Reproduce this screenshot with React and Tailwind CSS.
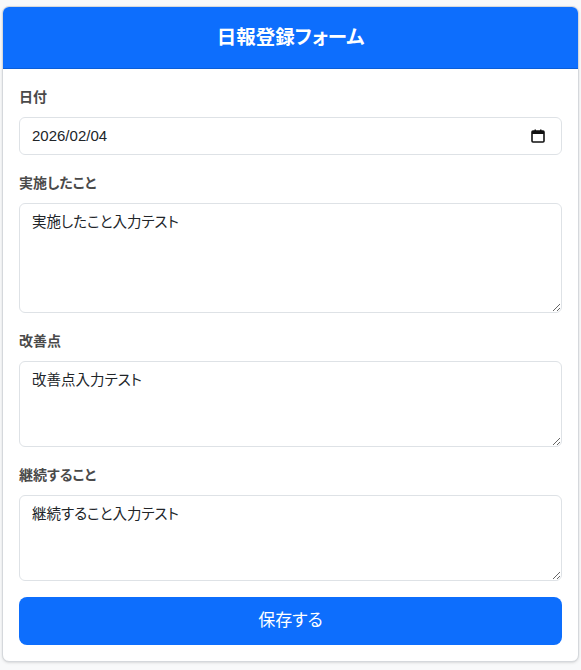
import React from "react";

const jp = "font-['Liberation_Sans','Noto_Sans_CJK_JP',sans-serif]";

const Label = ({ children }) => (
  <label className="block mb-2 h-6 leading-6 text-[14px] font-semibold text-[#4a4a4a]">{children}</label>
);

const Area = ({ value, h }) => (
  <textarea
    defaultValue={value}
    className={`block w-full ${h} rounded-[6px] border border-[#dee2e6] bg-white px-3 py-[6px] text-[14.5px] leading-6 text-[#212529] outline-none`}
  />
);

export default function App() {
  return (
    <div className={`min-h-[670px] bg-[#f8f9fa] pt-[6px] px-[2px] ${jp} [font-feature-settings:'palt']`}>
      <div className="rounded-[7px] border border-[#d5d8dc] bg-white shadow-sm overflow-hidden">
        <div className="h-[62px] bg-[#0d6efd] flex items-center justify-center border-b border-[#0b5ed7]">
          <h1 className="text-[19.5px] font-bold text-white">日報登録フォーム</h1>
        </div>
        <div className="p-4">
          <div className="mb-4">
            <Label>日付</Label>
            <div className="flex items-center h-[38px] rounded-[6px] border border-[#dee2e6] px-3 text-[15px] text-[#212529]">
              <span className="flex-1">2026/02/04</span>
              <svg width="14" height="14" viewBox="0 0 14 14" className="mr-[4px]">
                <rect x="1" y="2" width="12" height="11" rx="1" fill="none" stroke="#111" strokeWidth="1.6" />
                <rect x="1" y="2" width="12" height="3" fill="#111" />
                <rect x="3.5" y="0.5" width="1.5" height="2.5" fill="#111" />
                <rect x="9" y="0.5" width="1.5" height="2.5" fill="#111" />
              </svg>
            </div>
          </div>
          <div className="mb-4">
            <Label>実施したこと</Label>
            <Area value="実施したこと入力テスト" h="h-[110px]" />
          </div>
          <div className="mb-4">
            <Label>改善点</Label>
            <Area value="改善点入力テスト" h="h-[86px]" />
          </div>
          <div className="mb-4">
            <Label>継続すること</Label>
            <Area value="継続すること入力テスト" h="h-[86px]" />
          </div>
          <button className="w-full h-12 rounded-[8px] bg-[#0d6efd] text-white text-[17px]">保存する</button>
        </div>
      </div>
    </div>
  );
}
